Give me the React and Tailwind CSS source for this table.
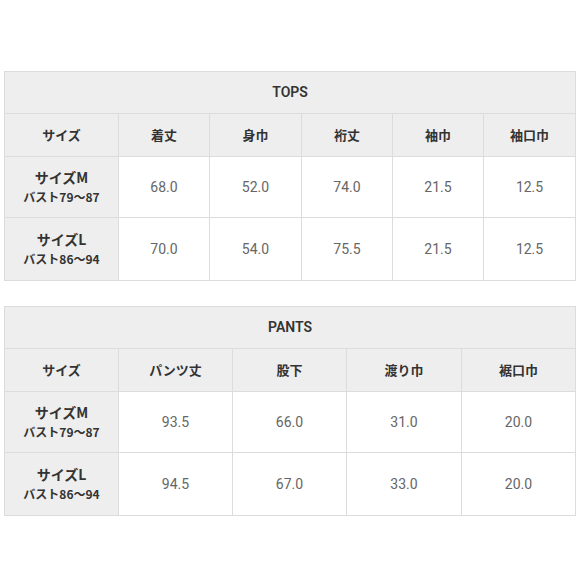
const font = { fontFamily: '"Noto Sans CJK JP", "Noto Sans", sans-serif' }
const numFont = { fontFamily: 'Roboto, "Noto Sans CJK JP", sans-serif' }

const tops = {
  title: 'TOPS',
  cols: ['着丈', '身巾', '裄丈', '袖巾', '袖口巾'],
  widths: ['w-[114px]', 'w-[91px]', 'w-[92px]', 'w-[91px]', 'w-[91px]', 'w-[92px]'],
  rows: [
    { size: 'サイズM', bust: 'バスト79〜87', values: ['68.0', '52.0', '74.0', '21.5', '12.5'] },
    { size: 'サイズL', bust: 'バスト86〜94', values: ['70.0', '54.0', '75.5', '21.5', '12.5'] },
  ],
}

const pants = {
  title: 'PANTS',
  cols: ['パンツ丈', '股下', '渡り巾', '裾口巾'],
  widths: ['w-[114px]', 'w-[114px]', 'w-[114px]', 'w-[115px]', 'w-[114px]'],
  rows: [
    { size: 'サイズM', bust: 'バスト79〜87', values: ['93.5', '66.0', '31.0', '20.0'] },
    { size: 'サイズL', bust: 'バスト86〜94', values: ['94.5', '67.0', '33.0', '20.0'] },
  ],
}

function SizeTable({ data }) {
  const span = data.cols.length + 1
  return (
    <table className="w-[571px] table-fixed border-collapse border border-[#dcdcdc]" style={font}>
      <colgroup>
        {data.widths.map((w, i) => (
          <col key={i} className={w} />
        ))}
      </colgroup>
      <tbody>
        <tr className="h-[42px] bg-[#eeeeee]">
          <td colSpan={span} className="border border-[#dcdcdc] text-center text-[14px] font-semibold text-[#333]" style={numFont}>
            {data.title}
          </td>
        </tr>
        <tr className="h-[43px] bg-[#eeeeee]">
          <td className="border border-[#dcdcdc] text-center text-[13px] font-bold text-[#333]">サイズ</td>
          {data.cols.map(c => (
            <td key={c} className="border border-[#dcdcdc] text-center text-[13px] font-bold text-[#333]">{c}</td>
          ))}
        </tr>
        {data.rows.map((r, i) => (
          <tr key={r.size} className={i === 0 ? 'h-[61px]' : 'h-[63px]'}>
            <td className="border border-[#dcdcdc] bg-[#eeeeee] text-center font-bold text-[#333] leading-[20px]">
              <div className="text-[14px]">{r.size}</div>
              <div className="text-[12px]">{r.bust}</div>
            </td>
            {r.values.map((v, j) => (
              <td key={j} className="border border-[#dcdcdc] bg-white text-center text-[14px] text-[#666]" style={numFont}>{v}</td>
            ))}
          </tr>
        ))}
      </tbody>
    </table>
  )
}

export default function App() {
  return (
    <div className="w-[583px] h-[583px] bg-white pt-[71px] pl-[4px]">
      <SizeTable data={tops} />
      <div className="h-[25px]" />
      <SizeTable data={pants} />
    </div>
  )
}
